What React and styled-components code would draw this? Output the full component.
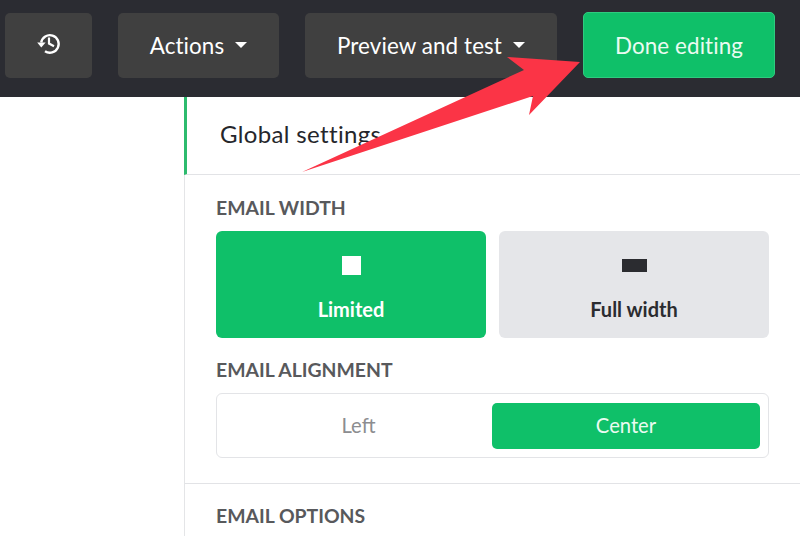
import React from "react";
import styled, { createGlobalStyle } from "styled-components";

const Global = createGlobalStyle`
  html, body { margin: 0; padding: 0; background: #fff; }
  body { width: 800px; height: 536px; overflow: hidden; font-family: "Lato", "Liberation Sans", sans-serif; }
`;
const Page = styled.div`
  position: relative;
  width: 800px;
  height: 536px;
  overflow: hidden;
  display: flex;
  flex-direction: column;
`;
const TopBar = styled.header`
  height: 97px;
  flex: none;
  box-sizing: border-box;
  background: #2b2c32;
  padding: 13px 25px 0 5px;
  display: flex;
  align-items: flex-start;
  gap: 26px;
`;
const BarButton = styled.button`
  width: ${(p) => p.$w}px;
  height: 65px;
  box-sizing: border-box;
  padding: 0;
  border: 0;
  border-radius: 5px;
  background: #404040;
  color: #fff;
  font: 400 22.4px "Lato", sans-serif;
  letter-spacing: 0.1px;
  display: flex;
  align-items: center;
  justify-content: center;
  gap: 11px;
`;
const DoneButton = styled(BarButton)`
  height: 66px;
  margin-top: -1px;
  background: #0fc069;
  color: #eafbf1;
  border: 1px solid #2fcb7f;
`;
const Caret = styled.span`
  width: 0;
  height: 0;
  margin-top: -2px;
  border-left: 6px solid transparent;
  border-right: 6px solid transparent;
  border-top: 6px solid #fff;
`;
const HistoryIcon = styled.svg`
  width: 24px;
  height: 24px;
  margin: -4px 0 0 1px;
  color: #fff;
`;
const Panel = styled.main`
  margin-left: 184px;
  flex: 1;
  border-left: 1px solid #e4e5e7;
  display: flex;
  flex-direction: column;
`;
const PanelHeader = styled.div`
  height: 78px;
  flex: none;
  box-sizing: border-box;
  margin-left: -1px;
  border-left: 3px solid #2dbb6e;
  border-bottom: 1px solid #e2e3e6;
  padding: 0 0 5px 33px;
  display: flex;
  align-items: center;
  font-size: 24px;
  letter-spacing: 0.35px;
  color: #25262b;
`;
const Section = styled.section`
  padding: 22px 31px 25px 31px;
  border-bottom: 1px solid #e2e3e6;
`;
const Label = styled.h3`
  margin: 0 0 12px;
  font: 700 19.4px/22px "Lato", sans-serif;
  color: #58595c;
`;
const Choices = styled.div`
  display: grid;
  grid-template-columns: 270px 270px;
  gap: 13px;
  margin-bottom: 21px;
`;
const Choice = styled.div`
  height: 107px;
  border-radius: 6px;
  background: ${(p) => (p.$active ? "#0fc069" : "#e5e6e9")};
  color: ${(p) => (p.$active ? "#fff" : "#2b2c30")};
  display: flex;
  flex-direction: column;
  align-items: center;
  font-weight: 700;
  font-size: 20px;
  line-height: 22px;
`;
const Glyph = styled.span`
  width: ${(p) => p.$w}px;
  height: ${(p) => p.$h}px;
  margin-top: ${(p) => p.$top}px;
  margin-bottom: ${(p) => p.$bottom}px;
  background: currentColor;
`;
const Segments = styled.div`
  width: 553px;
  height: 65px;
  box-sizing: border-box;
  border: 1px solid #e3e4e7;
  border-radius: 6px;
  padding: 9px 8px 8px;
  display: grid;
  grid-template-columns: 1fr 268px;
`;
const Segment = styled.div`
  box-sizing: border-box;
  padding-bottom: 3px;
  border-radius: 5px;
  background: ${(p) => (p.$active ? "#0fc069" : "transparent")};
  color: ${(p) => (p.$active ? "#eafbf1" : "#8c8d90")};
  font-size: 20.2px;
  display: flex;
  align-items: center;
  justify-content: center;
`;
const OptionsSection = styled.section`
  padding: 21px 31px 0;
`;
const Arrow = styled.svg`
  position: absolute;
  left: 0;
  top: 0;
  width: 800px;
  height: 536px;
  pointer-events: none;
`;

export default function App() {
  return (
    <Page>
      <Global />
      <TopBar>
        <BarButton $w={87} aria-label="History">
          <HistoryIcon viewBox="0 0 24 24">
            <path d="M4.2 10.5 A8.8 8.8 0 1 1 8 19.3" fill="none" stroke="currentColor" strokeWidth="2.4" />
            <polygon points="0.2,10.5 8.6,10.5 4.3,15.6" fill="currentColor" />
            <path d="M12 5.6 V11.6 L17 14.2" fill="none" stroke="currentColor" strokeWidth="2.2" />
          </HistoryIcon>
        </BarButton>
        <BarButton $w={161}>Actions<Caret /></BarButton>
        <BarButton $w={252}>Preview and test<Caret /></BarButton>
        <DoneButton $w={192}>Done editing</DoneButton>
      </TopBar>
      <Panel>
        <PanelHeader>Global settings</PanelHeader>
        <Section>
          <Label>EMAIL WIDTH</Label>
          <Choices>
            <Choice $active>
              <Glyph $w={19} $h={19} $top={25} $bottom={23} />
              Limited
            </Choice>
            <Choice>
              <Glyph $w={25} $h={13} $top={28} $bottom={26} />
              Full width
            </Choice>
          </Choices>
          <Label>EMAIL ALIGNMENT</Label>
          <Segments>
            <Segment>Left</Segment>
            <Segment $active>Center</Segment>
          </Segments>
        </Section>
        <OptionsSection>
          <Label>EMAIL OPTIONS</Label>
        </OptionsSection>
      </Panel>
      <Arrow viewBox="0 0 800 536">
        <polygon points="302,172 524,70 507,57 580,62 529,115 533,96" fill="#fb3446" />
      </Arrow>
    </Page>
  );
}
